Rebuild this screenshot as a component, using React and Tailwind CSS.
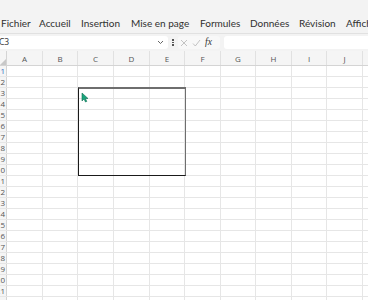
import React from "react";

const colW = [36, 35, 36, 36, 35, 36, 35, 36, 35, 36];
const cols = ["A", "B", "C", "D", "E", "F", "G", "H", "I", "J"];
const rows = Array.from({ length: 22 }, (_, i) => i + 1);
const menu = [
  ["Fichier", "w-[38px]"],
  ["Accueil", "w-[42px]"],
  ["Insertion", "w-[50px]"],
  ["Mise en page", "w-[69px]"],
  ["Formules", "w-[50px]"],
  ["Données", "w-[49px]"],
  ["Révision", "w-[47px]"],
  ["Affichage", "w-[60px]"],
];

export default function App() {
  return (
    <div className="w-[368px] h-[300px] overflow-hidden bg-white relative" style={{ fontFamily: '"Open Sans", "Liberation Sans", sans-serif' }}>
      {/* ribbon tabs */}
      <div className="h-[33px] bg-[#f3f3f3] flex items-end pb-[2px] pl-[1px] text-[10px] text-[#303030] whitespace-nowrap overflow-hidden" style={{ fontFamily: 'Lato, "Open Sans", sans-serif' }}>
        {menu.map(([m, c]) => (
          <span key={m} className={`${c} shrink-0`}>{m}</span>
        ))}
      </div>
      <div className="h-[1px] bg-[#e1e1e1]" />
      {/* formula bar */}
      <div className="h-[17px] bg-[#f3f3f3] flex items-center">
        <div className="w-[168px] h-[13px] bg-white rounded-r-[3px] flex items-center justify-between pr-[4px] text-[8.5px] text-[#333]">
          <span className="-ml-[1px]">C3</span>
          <svg width="7" height="5" viewBox="0 0 7 5"><path d="M1 1 L3.5 3.5 L6 1" fill="none" stroke="#555" strokeWidth="0.9" /></svg>
        </div>
        <div className="w-[10px] flex flex-col items-center gap-[1px] ml-[0px]">
          <div className="w-[1.5px] h-[1.5px] bg-[#555]" />
          <div className="w-[1.5px] h-[1.5px] bg-[#555]" />
          <div className="w-[1.5px] h-[1.5px] bg-[#555]" />
        </div>
        <div className="w-[42px] h-[13px] bg-[#f8f8f8] rounded-[3px] flex items-center gap-[4px] pl-[2px]">
          <svg width="8" height="8" viewBox="0 0 8 8"><path d="M1 1 L7 7 M7 1 L1 7" stroke="#b5b5b5" strokeWidth="0.8" /></svg>
          <svg width="9" height="8" viewBox="0 0 9 8"><path d="M1 4.5 L3.3 7 L8 1" fill="none" stroke="#b5b5b5" strokeWidth="0.8" /></svg>
          <span className="text-[9.5px] italic text-[#333]" style={{ fontFamily: '"Liberation Serif", serif' }}>fx</span>
        </div>
        <div className="ml-[4px] flex-1 h-[13px] bg-white rounded-l-[3px]" />
      </div>
      {/* column headers */}
      <div className="h-[15px] flex bg-[#f5f5f5] border-b border-[#d4d4d4]">
        <div className="w-[7px] shrink-0 border-r border-[#d4d4d4] relative">
          <svg className="absolute right-[0px] bottom-[0px]" width="6" height="6" viewBox="0 0 6 6"><path d="M6 0 L6 6 L0 6 Z" fill="#c8c8c8" /></svg>
        </div>
        {cols.map((c, i) => (
          <div key={c} style={{ width: colW[i] }} className="shrink-0 border-r border-[#e1e1e1] flex items-center justify-center text-[8px] text-[#555] pt-[1px]">{c}</div>
        ))}
      </div>
      {/* grid */}
      <div className="flex flex-col">
        {rows.map((r) => (
          <div key={r} className="h-[11px] flex border-b border-[#e6e6e6]">
            <div className="w-[7px] shrink-0 bg-[#f5f5f5] border-r border-[#d4d4d4] overflow-hidden flex justify-end">
              <span className={`text-[8px] leading-[10px] pr-[1px] ${r === 1 ? "text-[#3a6fc4]" : "text-[#555]"}`}>{r}</span>
            </div>
            {colW.map((w, i) => (
              <div key={i} style={{ width: w }} className="shrink-0 border-r border-[#e6e6e6]" />
            ))}
          </div>
        ))}
      </div>
      {/* drawn rectangle */}
      <div className="absolute left-[78px] top-[87px] w-[108px] h-[89px] border border-[#1a1a1a] border-t-[2px] border-t-[#6e6e6e] border-r-[#6e6e6e]" />
      {/* cursor */}
      <svg className="absolute left-[81px] top-[92px]" width="8" height="11" viewBox="0 0 8 11">
        <path d="M1 1 L1 9 L3 7 L4.5 10 L5.8 9.4 L4.4 6.5 L7 6.5 Z" fill="#1aa57d" stroke="#0d6e52" strokeWidth="0.6" strokeLinejoin="round" />
      </svg>
    </div>
  );
}
